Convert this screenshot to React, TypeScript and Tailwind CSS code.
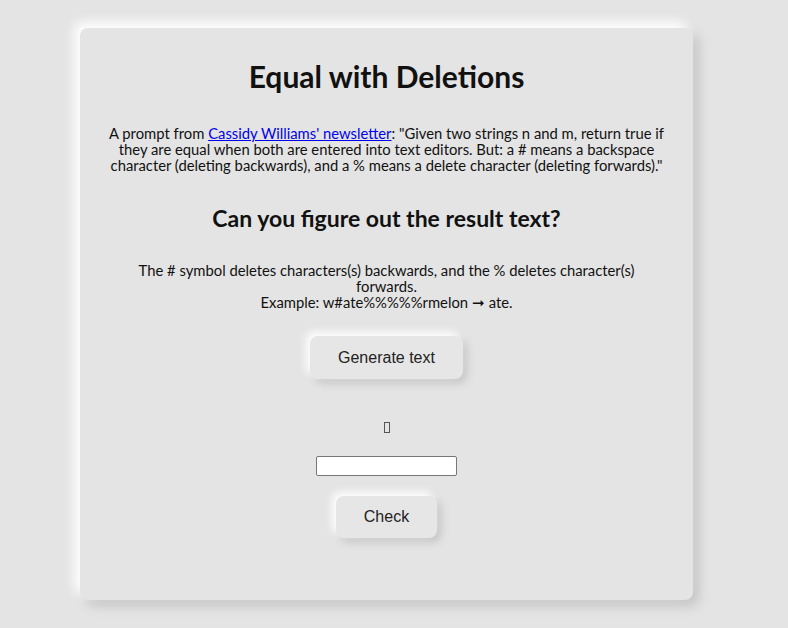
import React, { useState } from "react";

const font = { fontFamily: "Lato, 'Open Sans', sans-serif" };

const App = () => {
  const [guess, setGuess] = useState("");

  return (
    <div className="min-h-screen w-full bg-[#e4e4e4] flex justify-start pl-[80px] pt-[28px]">
      <div
        className="w-[613px] h-[572px] rounded-[8px] bg-[#e4e4e4] text-center text-[#111] shadow-[-6px_-6px_12px_#ffffff,6px_6px_12px_#c4c4c4] px-[26px] pt-[28px]"
        style={font}
      >
        {/* Title */}
        <h1 className="text-[30px] font-bold leading-[40px]">Equal with Deletions</h1>

        {/* Prompt */}
        <p className="mt-[29px] text-[14.8px] leading-[16px]">
          A prompt from{" "}
          <a href="#" className="text-[#0000ee] underline">
            Cassidy Williams' newsletter
          </a>
          : "Given two strings n and m, return true if they are equal when both are entered into text
          editors. But: a # means a backspace character (deleting backwards), and a % means a delete
          character (deleting forwards)."
        </p>

        <h2 className="mt-[29px] text-[23px] font-bold leading-[32px]">
          Can you figure out the result text?
        </h2>

        <p className="mt-[28px] mx-auto w-[505px] text-[14.8px] leading-[16px]">
          The # symbol deletes characters(s) backwards, and the % deletes character(s) forwards.
          <br />
          Example: w#ate%%%%%rmelon ➞ ate.
        </p>

        <div className="mt-[26px] flex justify-center">
          <button
            className="w-[153px] h-[43px] rounded-[8px] bg-[#e6e6e6] text-[16px] text-[#222] shadow-[-4px_-4px_8px_#ffffff,4px_4px_8px_#c4c4c4]"
            style={{ fontFamily: "'Liberation Sans', Arial, sans-serif" }}
          >
            Generate text
          </button>
        </div>

        <div className="mt-[40px] h-[16px] flex justify-center items-center">
          <span className="inline-block w-[6px] h-[11px] border border-[#555]"></span>
        </div>

        <div className="mt-[21px] flex justify-center">
          <input
            value={guess}
            onChange={(e) => setGuess(e.target.value)}
            className="w-[141px] h-[20px] bg-white border border-[#777] rounded-[2px] outline-none"
          />
        </div>

        <div className="mt-[20px] flex justify-center">
          <button
            className="w-[101px] h-[42px] rounded-[8px] bg-[#e6e6e6] text-[16px] text-[#222] shadow-[-4px_-4px_8px_#ffffff,4px_4px_8px_#c4c4c4]"
            style={{ fontFamily: "'Liberation Sans', Arial, sans-serif" }}
          >
            Check
          </button>
        </div>
      </div>
    </div>
  );
};

export default App;
